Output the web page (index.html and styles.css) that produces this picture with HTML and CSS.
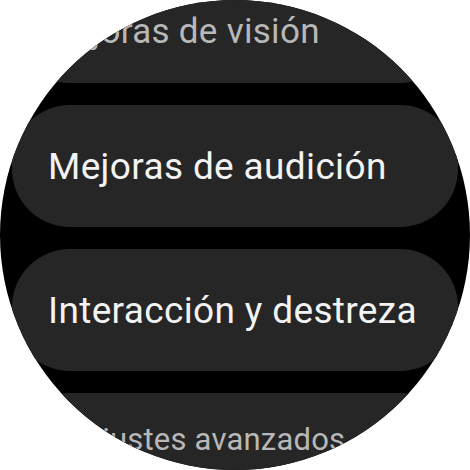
FILE: index.html
```html
<!DOCTYPE html>
<html lang="es">
<head>
<meta charset="utf-8">
<title>Accesibilidad</title>
<link rel="stylesheet" href="styles.css">
</head>
<body>
<div class="watch">
  <div class="list">
    <div class="chip chip-top"><span class="label dim">Mejoras de visión</span></div>
    <div class="chip"><span class="label">Mejoras de audición</span></div>
    <div class="chip"><span class="label">Interacción y destreza</span></div>
    <div class="chip chip-bottom"><span class="label dim">Ajustes avanzados</span></div>
  </div>
</div>
</body>
</html>
```

FILE: styles.css
```css
html, body {
  margin: 0;
  padding: 0;
  background: #ffffff;
}

.watch {
  width: 470px;
  height: 470px;
  border-radius: 50%;
  overflow: hidden;
  background: #000000;
  font-family: Roboto, "Noto Sans", sans-serif;
}

.list {
  display: flex;
  flex-direction: column;
  gap: 22px;
  padding: 0 12px;
  margin-top: -39px;
}

.chip {
  height: 122px;
  box-sizing: border-box;
  border-radius: 58px;
  background: #262626;
  display: flex;
  align-items: center;
  padding: 0 36px;
}

.label {
  font-size: 37px;
  color: #f3f3f3;
  white-space: nowrap;
  letter-spacing: 0.35px;
}

.label.dim {
  color: #b8b8b8;
}

.chip-top {
  padding: 18px 0 0 30px;
}

.chip-top .label {
  font-size: 35px;
  letter-spacing: 0.3px;
}

.chip-bottom {
  padding: 0 0 30px 70px;
}

.chip-bottom .label {
  font-size: 31px;
  letter-spacing: 0.2px;
}
```
